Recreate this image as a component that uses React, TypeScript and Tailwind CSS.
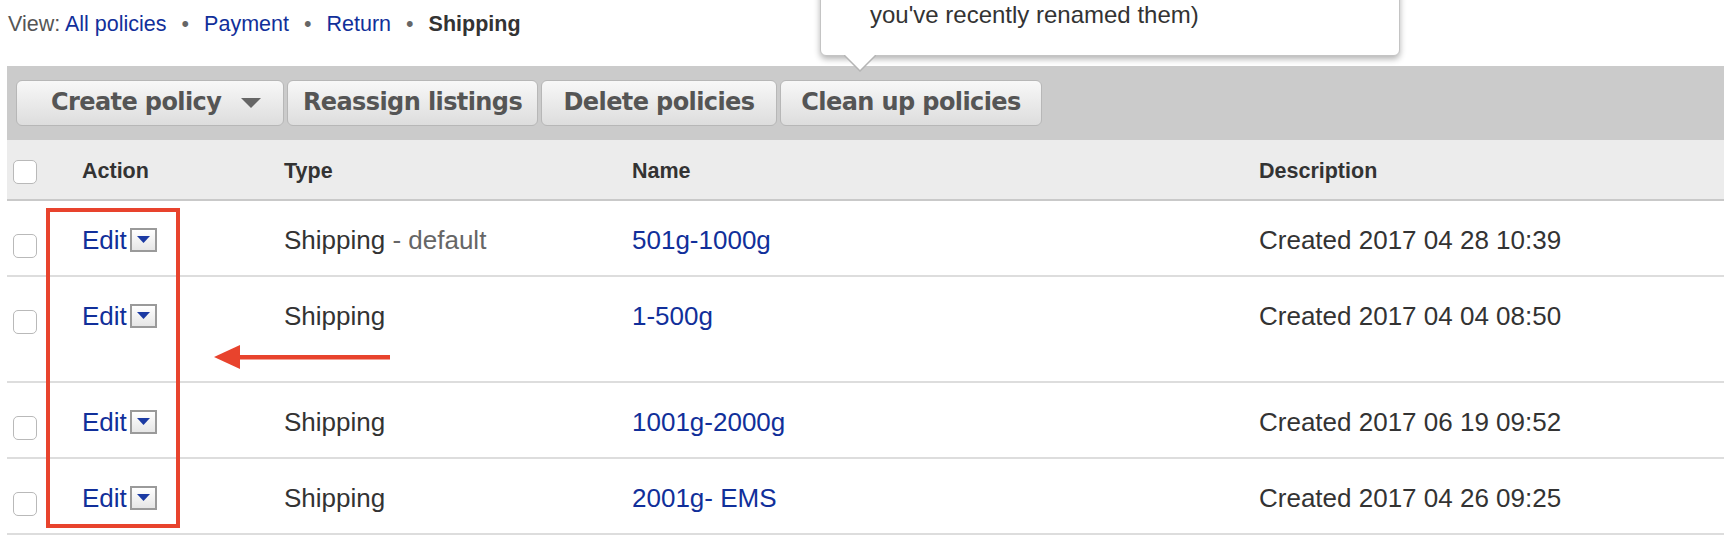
import React from 'react';

const rows = [
  { type: 'Shipping', suffix: ' - default', name: '501g-1000g', desc: 'Created 2017 04 28 10:39', tall: false },
  { type: 'Shipping', suffix: '', name: '1-500g', desc: 'Created 2017 04 04 08:50', tall: true },
  { type: 'Shipping', suffix: '', name: '1001g-2000g', desc: 'Created 2017 06 19 09:52', tall: false },
  { type: 'Shipping', suffix: '', name: '2001g- EMS', desc: 'Created 2017 04 26 09:25', tall: false },
];

function Checkbox() {
  return <span className="block w-[24px] h-[24px] rounded-[5px] border-[1.5px] border-[#b9b9b9] bg-white" />;
}

function EditMenu() {
  return (
    <span className="flex items-center gap-[3px]">
      <a className="text-[#112f9a]">Edit</a>
      <span className="flex items-center justify-center w-[27px] h-[24px] border-2 border-[#9a9a9a] bg-linear-to-b from-white to-[#e6e6e6]">
        <svg width="13" height="8" viewBox="0 0 13 8">
          <polygon points="0,0 13,0 6.5,7" fill="#1b3aa3" />
        </svg>
      </span>
    </span>
  );
}

export default function App() {
  const btn =
    'flex items-center h-[46px] pb-[3px] rounded-[6px] border border-[#b7b7b7] bg-linear-to-b from-[#f8f8f8] to-[#dddddd] text-[#555] font-bold text-[24px] tracking-[-0.6px]';

  return (
    <div className="relative w-[1724px] h-[540px] overflow-hidden bg-white font-['Liberation_Sans',Arial,sans-serif] text-[#333]">
      {/* view filter */}
      <div className="h-[66px] pl-[8px] pt-[11px] text-[21.5px] leading-[26px] text-[#555]">
        View: <a className="text-[#112f9a]">All policies</a>
        <span className="px-[15px] text-[#666]">•</span>
        <a className="text-[#112f9a]">Payment</a>
        <span className="px-[15px] text-[#666]">•</span>
        <a className="text-[#112f9a]">Return</a>
        <span className="px-[15px] text-[#666]">•</span>
        <span className="font-bold text-[#333]">Shipping</span>
      </div>

      <div className="ml-[7px]">
        {/* toolbar */}
        <div className="flex items-center gap-[3px] h-[74px] pl-[9px] bg-[#cbcbcb] font-['DejaVu_Sans',sans-serif]">
          <button className={`${btn} w-[268px] justify-start gap-[20px] pl-[34px]`}>
            <span>Create policy</span>
            <svg className="mt-[3px]" width="20" height="10" viewBox="0 0 20 10">
              <polygon points="0,0 20,0 10,10" fill="#666" />
            </svg>
          </button>
          <button className={`${btn} w-[251px] justify-center`}>Reassign listings</button>
          <button className={`${btn} w-[236px] justify-center`}>Delete policies</button>
          <button className={`${btn} w-[262px] justify-center`}>Clean up policies</button>
        </div>

        {/* header */}
        <div className="grid grid-cols-[75px_202px_348px_627px_1fr] items-center h-[61px] pt-[4px] bg-[#ececec] border-b-2 border-[#c9c9c9] text-[21.5px] font-bold text-[#333]">
          <div className="pl-[6px]">
            <Checkbox />
          </div>
          <div>Action</div>
          <div>Type</div>
          <div>Name</div>
          <div>Description</div>
        </div>

        {/* rows */}
        {rows.map((r) => (
          <div
            key={r.name}
            className={`grid grid-cols-[75px_202px_348px_627px_1fr] items-start border-b-2 border-[#dddddd] pt-[26px] text-[26px] leading-[26px] ${
              r.tall ? 'h-[106px]' : 'h-[76px]'
            }`}
          >
            <div className="pl-[6px] pt-[7px]">
              <Checkbox />
            </div>
            <div>
              <EditMenu />
            </div>
            <div>
              {r.type}
              {r.suffix && <span className="text-[#666]">{r.suffix}</span>}
            </div>
            <div>
              <a className="text-[#112f9a]">{r.name}</a>
            </div>
            <div>{r.desc}</div>
          </div>
        ))}
      </div>

      {/* tooltip */}
      <div className="absolute left-[820px] top-[-20px] z-10">
        <div className="w-[580px] h-[76px] bg-white border border-[#c4c4c4] rounded-b-[6px] shadow-[0_3px_6px_rgba(0,0,0,0.3)] pl-[49px] pt-[19px] text-[24px] leading-[30px] text-[#333]">
          you've recently renamed them)
        </div>
        <svg className="absolute left-[24px] top-[75px]" width="32" height="17" viewBox="0 0 32 17">
          <polygon points="0,0 32,0 16,16" fill="#fff" />
          <polyline points="0,0 16,16 32,0" fill="none" stroke="#b5b5b5" strokeWidth="1.5" />
        </svg>
      </div>

      {/* annotation */}
      <div className="absolute left-[46px] top-[208px] w-[134px] h-[320px] border-4 border-[#e8432d]" />
      <svg className="absolute left-[212px] top-[344px]" width="182" height="26" viewBox="0 0 182 26">
        <polygon points="2,13 28,1 28,25" fill="#e8432d" />
        <rect x="26" y="11" width="152" height="4.5" fill="#e8432d" />
      </svg>
    </div>
  );
}
